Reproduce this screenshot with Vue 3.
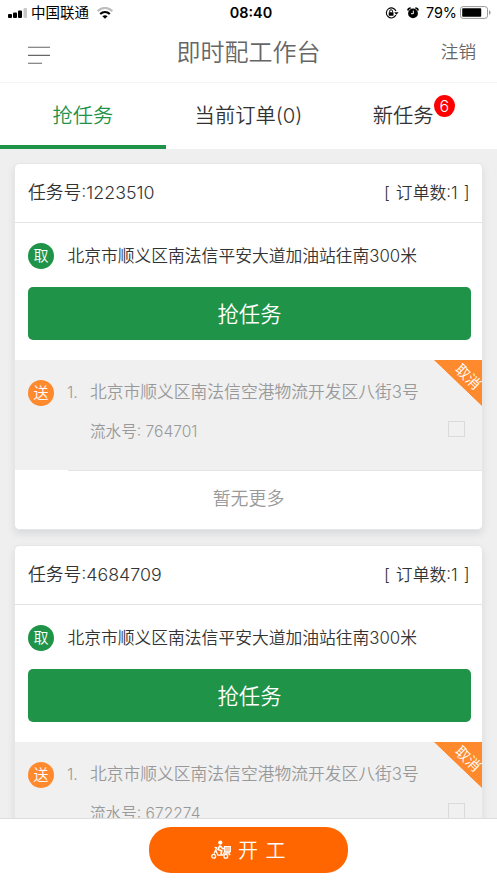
<script setup>
const tasks = [
  { id: '1223510', serial: '764701' },
  { id: '4684709', serial: '672274' },
]
</script>

<template>
  <div class="app">
    <header class="status">
      <svg class="signal" width="19" height="10" viewBox="0 0 19 10">
        <rect x="0" y="6" width="4" height="4" rx="1" />
        <rect x="5" y="4.5" width="4" height="5.5" rx="1" />
        <rect x="10" y="2.5" width="4" height="7.5" rx="1" />
        <rect x="15.5" y="0" width="3.5" height="10" rx="1" fill="#c8c8c8" />
      </svg>
      <span class="carrier">中国联通</span>
      <svg class="wifi" width="16" height="12" viewBox="0 0 16 12" fill="none">
        <path d="M.6 4.2C5-.1 11-.1 15.4 4.2" stroke="#bdbdbd" stroke-width="2.2" />
        <path d="M3.2 7c2.8-2.5 6.8-2.5 9.6 0" stroke="#000" stroke-width="2.2" />
        <path d="M5.4 9.2c1.6-1.4 3.6-1.4 5.2 0L8 11.8z" fill="#000" />
      </svg>
      <span class="clock">08:40</span>
      <div class="status-right">
        <svg width="14" height="12" viewBox="0 0 14 12" fill="none" stroke="#000">
          <path d="M10.9 8.1A5 5 0 1 1 11 4" stroke-width="1.1" />
          <path d="M9.2 5.2h4.4l-2.2 2.5z" fill="#000" stroke="none" />
          <rect x="3.7" y="5.2" width="4.8" height="3.6" rx=".4" fill="#000" stroke="none" />
          <path d="M4.7 5.4V4.2a1.4 1.4 0 0 1 2.8 0v1.2" />
        </svg>
        <svg class="alarm" width="12" height="12" viewBox="0 0 12 12">
          <circle cx="6" cy="6.4" r="4.9" />
          <path d="M.8 3.5A3 3 0 0 1 3.7 1M11.2 3.5A3 3 0 0 0 8.3 1" fill="none" stroke="#000" stroke-width="1.7" />
          <path d="M6.3 3.6v3.1H4" fill="none" stroke="#fff" stroke-width="1" />
        </svg>
        <span class="percent">79%</span>
        <svg class="battery" width="31" height="13" viewBox="0 0 31 13">
          <rect x=".5" y=".6" width="27" height="11.8" rx="2.6" fill="none" stroke="#999" />
          <rect x="2.2" y="2.3" width="19" height="8.4" rx=".8" />
          <path d="M29 4.3q1.6.5 1.6 2.2T29 8.7z" fill="#999" />
        </svg>
      </div>
    </header>

    <nav class="navbar">
      <svg class="menu" width="22" height="18" viewBox="0 0 22 18" stroke="#666" stroke-width="1.1">
        <path d="M0 1.3h22M0 9.4h22M0 17.3h14" />
      </svg>
      <h1>即时配工作台</h1>
      <span class="logout">注销</span>
    </nav>

    <div class="tabs">
      <div class="tab active">抢任务</div>
      <div class="tab">当前订单(0)</div>
      <div class="tab"><span class="tab-label">新任务<i class="count">6</i></span></div>
    </div>

    <main class="list">
      <section v-for="task in tasks" :key="task.id" class="card">
        <div class="card-head">
          <span class="task-no">任务号:{{ task.id }}</span>
          <span class="order-count">[ 订单数:1 ]</span>
        </div>
        <div class="pickup">
          <span class="dot green">取</span>
          <span class="address">北京市顺义区南法信平安大道加油站往南300米</span>
        </div>
        <button class="grab">抢任务</button>
        <div class="delivery">
          <span class="dot orange">送</span>
          <span class="index">1.</span>
          <div class="detail">
            <div class="address">北京市顺义区南法信空港物流开发区八街3号</div>
            <div class="serial"><span>流水号: {{ task.serial }}</span><i class="check"></i></div>
          </div>
          <div class="ribbon"><span>取消</span></div>
        </div>
        <div class="more">暂无更多</div>
      </section>
    </main>

    <footer class="footer">
      <button class="start">
        <svg width="20" height="20" viewBox="0 0 20 20" fill="none" stroke="#fff" stroke-width="1.3">
          <circle cx="9.3" cy="2.6" r="2.1" fill="#fff" stroke="none" />
          <path d="M9 5.4L7 9.5l3.6 1.3-.6 4M9.2 5.7l2.2 2.8 2.2.2" stroke-width="1.7" />
          <path d="M3.6 7.4l2 .3-2.4 5.8M4.8 10l2 5.2h4.9l1.3-2.2h6" />
          <circle cx="2.7" cy="16.2" r="1.9" />
          <circle cx="14.8" cy="16.2" r="1.9" />
          <rect x="13.4" y="6.5" width="6" height="5.3" fill="#ffc49e" stroke-width="1" />
          <path d="M17.6 14.5h1.8" />
        </svg>
        <span>开 工</span>
      </button>
    </footer>
  </div>
</template>

<style>
body {
  overflow: hidden;
}
</style>

<style scoped>
.app {
  height: 883px;
  display: flex;
  flex-direction: column;
  overflow: hidden;
  background: #efefef;
  color: #333;
  font-family: Inter, "Noto Sans CJK SC", sans-serif;
  font-weight: 350;
}
i {
  font-style: normal;
}
button {
  border: 0;
  padding: 0;
  color: #fff;
  font: inherit;
}
.status {
  flex: none;
  height: 26px;
  display: grid;
  grid-template-columns: 19px 70px 1fr;
  align-items: center;
  position: relative;
  padding: 0 6px 0 8px;
  background: #fff;
  color: #000;
  box-sizing: border-box;
  font-weight: 400;
}
.carrier {
  margin-left: 4px;
  font-size: 14.5px;
  line-height: 26px;
}
.clock {
  position: absolute;
  left: 0;
  width: 502px;
  text-align: center;
  font-size: 14.4px;
  font-weight: 600;
  line-height: 26px;
}
.status-right {
  position: absolute;
  right: 6px;
  top: 0;
  height: 25px;
  display: flex;
  align-items: center;
}
.alarm {
  margin-left: 8px;
}
.percent {
  margin: 0 3px 0 7px;
  font-size: 14.4px;
}
.navbar {
  flex: none;
  height: 57px;
  box-sizing: border-box;
  display: grid;
  grid-template-columns: 80px 1fr 88px;
  align-items: center;
  padding: 0 20px 4px 28px;
  background: #fff;
  border-bottom: 1px solid #f5f5f5;
  color: #666;
}
.menu {
  margin-top: 5px;
}
h1 {
  margin: 2px 0 0;
  font-size: 24px;
  font-weight: inherit;
  line-height: 36px;
  text-align: center;
}
.logout {
  justify-self: end;
  margin: 0 1px 3px 0;
  font-size: 17.6px;
}
.tabs {
  flex: none;
  height: 66px;
  display: grid;
  grid-template-columns: repeat(3, 1fr);
  background: #fff;
  font-size: 20.3px;
}
.tab {
  text-align: center;
  line-height: 66px;
}
.active {
  color: #1f9347;
  box-shadow: inset 0 -4px #1f9347;
}
.tab-label {
  position: relative;
  left: -11px;
}
.count {
  position: absolute;
  left: 61px;
  top: -8px;
  width: 21px;
  height: 22px;
  border-radius: 50%;
  background: #f00;
  color: #fff;
  font-size: 16px;
  line-height: 22px;
  text-align: center;
}
.list {
  flex: 1;
  min-height: 0;
  overflow: hidden;
  padding: 13.5px 14px 0;
}
.card {
  height: 367px;
  margin-bottom: 15px;
  box-sizing: border-box;
  border: 1px solid #e6e6e6;
  border-radius: 5px;
  overflow: hidden;
  background: #fff;
  box-shadow: 0 4px 7px rgba(90, 100, 110, .14);
}
.card-head {
  height: 59px;
  box-sizing: border-box;
  display: flex;
  justify-content: space-between;
  align-items: center;
  padding: 0 12.5px 3px 13px;
  border-bottom: 1px solid #e4e4e4;
  font-size: 17.8px;
}
.order-count {
  font-size: 16.8px;
  word-spacing: 1.4px;
  padding-top: 1px;
}
.pickup {
  height: 64px;
  display: flex;
  align-items: center;
  padding: 2px 13px 0;
  box-sizing: border-box;
}
.dot {
  flex: none;
  width: 26px;
  height: 26px;
  border-radius: 50%;
  color: #fff;
  font-size: 15px;
  line-height: 26px;
  text-align: center;
}
.green {
  background: #1f9347;
}
.orange {
  background: #ff8a2e;
}
.address {
  font-size: 16.77px;
  line-height: 26px;
  white-space: nowrap;
}
.pickup .address {
  margin-left: 13.5px;
}
.grab {
  display: block;
  width: calc(100% - 24px);
  height: 53px;
  margin: 0 11px 20px 13px;
  padding-bottom: 2px;
  border-radius: 5px;
  background: #1f9347;
  font-size: 21.3px;
}
.delivery {
  position: relative;
  height: 110px;
  box-sizing: border-box;
  display: flex;
  padding: 20px 17px 0 13px;
  background: #f0f0f0;
  color: #999;
}
.delivery .address {
  margin-top: -1px;
}
.index {
  width: 23px;
  margin: -1px 0 0 13px;
  font-size: 16px;
  line-height: 26px;
}
.detail {
  flex: 1;
}
.serial {
  display: flex;
  justify-content: space-between;
  margin-top: 14px;
  font-size: 15.6px;
  line-height: 26px;
}
.check {
  width: 15px;
  height: 14px;
  margin-top: 2px;
  border: 1px solid #dadada;
}
.ribbon {
  position: absolute;
  top: 0;
  right: 0;
  width: 48px;
  height: 46px;
  background: linear-gradient(to top right, transparent 49.5%, #ff8a2e 50.5%);
  color: #fff;
}
.ribbon span {
  position: absolute;
  left: 19px;
  top: 7px;
  width: 30px;
  font-size: 14.5px;
  line-height: 20px;
  text-align: center;
  transform: rotate(44deg);
}
.more {
  height: 58px;
  margin-left: 53px;
  padding-right: 53px;
  border-top: 1px solid #e4e4e4;
  color: #999;
  font-size: 17.9px;
  line-height: 56px;
  text-align: center;
}
.footer {
  flex: none;
  position: relative;
  height: 65px;
  box-sizing: border-box;
  padding-top: 8px;
  border-top: 1px solid #ddd;
  background: #fff;
}
.start {
  width: 199px;
  height: 46px;
  margin: 0 auto;
  display: flex;
  align-items: center;
  padding-left: 62px;
  border-radius: 22px;
  background: #f60;
  font-size: 20px;
}
.start span {
  margin: 0 0 1px 7px;
  word-spacing: 2px;
}
</style>
